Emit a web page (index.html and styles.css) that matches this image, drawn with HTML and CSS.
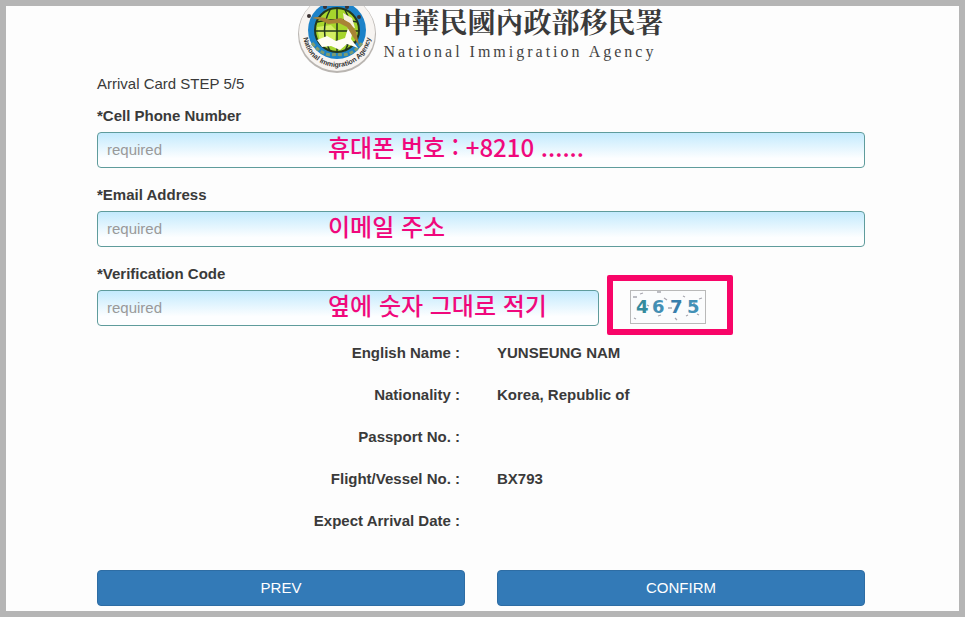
FILE: index.html
```html
<!DOCTYPE html>
<html lang="en">
<head>
    <meta charset="UTF-8">
    <meta name="viewport" content="width=device-width, initial-scale=1.0">
    <title>Arrival Card</title>
    <link rel="stylesheet" href="styles.css">
</head>
<body>

<div class="page">
    <header class="site-header">
        <svg class="logo" viewBox="0 6 80 68" aria-hidden="true">
            <defs>
                <path id="ringBottom" d="M6 33 A34 34 0 0 0 74 33"/>
            </defs>
            <circle cx="40" cy="34" r="39" fill="#b9b5b1"/>
            <circle cx="40" cy="33" r="38" fill="#f7f4f1"/>
            <circle cx="40" cy="30" r="29" fill="#1c82c8"/>
            <path d="M15 43 Q27 58 40 54 Q53 58 65 43" fill="none" stroke="#7c9c72" stroke-width="3" stroke-dasharray="4 2"/>
            <circle cx="40" cy="30" r="22" fill="#a6d62c" stroke="#23371d" stroke-width="2"/>
            <path d="M20 27 L34 25 L39 30 L38 40 L30 38 L23 42 Z" fill="#d3ee62"/>
            <path d="M40 8 V52 M20 22 Q40 17 60 22 M18 31 H62 M22 42 Q40 47 58 42 M33 10 Q22 30 33 51 M48 10 Q59 30 48 51" fill="none" stroke="#23371d" stroke-width="1.5"/>
            <path d="M20 40 L30 36 L39 41 L48 38 L51 28 L56 30 L54 39 L61 48 L50 44 L43 50 L34 46 L25 47 Z" fill="#fffdf4"/>
            <path d="M46 13 L55 18 L58 28 L53 27 L47 20 Z" fill="#f7f1dd"/>
            <path d="M15 18 Q24 15 33 20 L44 18 L53 23 L59 31 L62 45 L56 37 L50 27 L42 23 L31 24 Q23 19 15 18 Z" fill="#a98435"/>
            <circle cx="12" cy="16" r="2" fill="#3b3232"/>
            <circle cx="62" cy="17" r="2" fill="#3b3232"/>
            <circle cx="28" cy="7" r="2" fill="#3b3232"/>
            <circle cx="50" cy="7" r="2" fill="#3b3232"/>
            <text class="ring-text"><textPath href="#ringBottom" startOffset="50%" text-anchor="middle">National Immigration Agency</textPath></text>
        </svg>
        <div class="brand">
            <div class="brand-zh" lang="zh-Hant">中華民國內政部移民署</div>
            <div class="brand-en">National Immigration Agency</div>
        </div>
    </header>

    <main class="content">
        <p class="step">Arrival Card STEP 5/5</p>

        <form>
            <div class="field">
                <label for="phone">*Cell Phone Number</label>
                <div class="control">
                    <input type="tel" id="phone" name="phone" placeholder="required">
                    <span class="note" lang="ko">휴대폰 번호 : +8210 ......</span>
                </div>
            </div>

            <div class="field">
                <label for="email">*Email Address</label>
                <div class="control">
                    <input type="email" id="email" name="email" placeholder="required">
                    <span class="note" lang="ko">이메일 주소</span>
                </div>
            </div>

            <div class="field">
                <label for="code">*Verification Code</label>
                <div class="code-row">
                    <div class="control">
                        <input type="text" id="code" name="code" placeholder="required">
                        <span class="note" lang="ko">옆에 숫자 그대로 적기</span>
                    </div>
                    <div class="captcha">
                        <svg class="captcha-image" viewBox="0 0 76 34">
                            <rect x="0.5" y="0.5" width="75" height="33" fill="#fbfcfd" stroke="#b9b9b9"/>
                            <g fill="none" stroke="#a8a8b0" stroke-width="1.3">
                                <path d="M3 7h4M10 4l3-1M27 2h4M34 8l3 2M53 6l2 1M69 9l3-1M38 18h4M17 15l2 1M28 26l3-1M45 28l2 2M56 26l2-1M67 24l2 1M4 28l2 1M50 11l1 2M63 14l2-1"/>
                            </g>
                            <g class="captcha-text">
                                <text x="6" y="23" fill="#358b9d">4</text>
                                <text x="22" y="23" fill="#438fb4">6</text>
                                <text x="40" y="23" fill="#397fad">7</text>
                                <text x="57" y="23" fill="#4391b6">5</text>
                            </g>
                        </svg>
                    </div>
                </div>
            </div>

            <dl class="summary">
                <dt>English Name :</dt>
                <dd>YUNSEUNG NAM</dd>
                <dt>Nationality :</dt>
                <dd>Korea, Republic of</dd>
                <dt>Passport No. :</dt>
                <dd></dd>
                <dt>Flight/Vessel No. :</dt>
                <dd>BX793</dd>
                <dt>Expect Arrival Date :</dt>
                <dd></dd>
            </dl>

            <div class="actions">
                <button type="button">PREV</button>
                <button type="submit">CONFIRM</button>
            </div>
        </form>
    </main>
</div>

</body>
</html>
```

FILE: styles.css
```css
* {
    margin: 0;
    padding: 0;
    box-sizing: border-box;
}

body {
    font-family: "Liberation Sans", Arial, sans-serif;
    font-size: 15px;
    line-height: 22px;
    color: #3a3a3a;
    background-color: #fdfdfd;
}

.page {
    min-height: 100vh;
    border: 6px solid #b5b5b5;
}

/* Header */
.site-header {
    display: flex;
    justify-content: center;
    gap: 6px;
    height: 67px;
    padding-right: 4px;
}

.logo {
    width: 80px;
    height: 68px;
}

.ring-text {
    font-family: "Liberation Sans", Arial, sans-serif;
    font-size: 7px;
    font-weight: bold;
    fill: #333;
}

.brand-zh {
    font-family: "Noto Serif CJK TC", "Noto Sans CJK TC", serif;
    font-size: 28px;
    font-weight: bold;
    line-height: 30px;
}

.brand-en {
    font-family: "Liberation Serif", "Times New Roman", serif;
    font-size: 16px;
    letter-spacing: 3px;
    line-height: 32px;
    color: #444;
}

/* Form */
.content {
    padding: 0 94px 0 91px;
}

.step {
    margin-bottom: 10px;
}

.field {
    margin-bottom: 16px;
}

.field label {
    display: block;
    margin-bottom: 5px;
    font-weight: bold;
}

.control {
    position: relative;
}

.control input {
    display: block;
    width: 100%;
    height: 36px;
    padding: 0 9px 2px;
    font: inherit;
    color: #555;
    background: linear-gradient(#c3eafd, #fdfeff 75%);
    border: 1px solid #5f9c9c;
    border-radius: 4px;
}

.control input::placeholder {
    color: #999;
    opacity: 1;
}

/* Handwritten style hints over the fields */
.note {
    position: absolute;
    top: 0;
    left: 231px;
    font-family: "Noto Sans CJK KR", sans-serif;
    font-size: 24px;
    font-weight: 500;
    line-height: 30px;
    color: #f0087c;
    white-space: nowrap;
    pointer-events: none;
}

.code-row {
    display: grid;
    grid-template-columns: 2fr 1fr;
    gap: 15px;
}

.captcha {
    position: relative;
    padding-left: 16px;
}

.captcha::after {
    content: "";
    position: absolute;
    top: -15px;
    left: -7px;
    width: 126px;
    height: 60px;
    border: 6px solid #f80568;
    border-radius: 2px;
    box-sizing: border-box;
}

.captcha-image {
    display: block;
    width: 76px;
    height: 34px;
}

.captcha-text {
    font-family: "DejaVu Sans", sans-serif;
    font-size: 18px;
    font-weight: bold;
}

/* Summary */
.summary {
    display: grid;
    grid-template-columns: 1fr 1fr;
    column-gap: 32px;
    row-gap: 20px;
    margin-bottom: 38px;
    font-weight: bold;
}

.summary dt {
    padding-right: 5px;
    text-align: right;
}

/* Buttons */
.actions {
    display: grid;
    grid-template-columns: 1fr 1fr;
    gap: 32px;
}

.actions button {
    height: 36px;
    font: inherit;
    color: #fff;
    background-color: #337ab7;
    border: 1px solid #2e6da4;
    border-radius: 4px;
    cursor: pointer;
}

.actions button:hover {
    background-color: #286090;
}
```
